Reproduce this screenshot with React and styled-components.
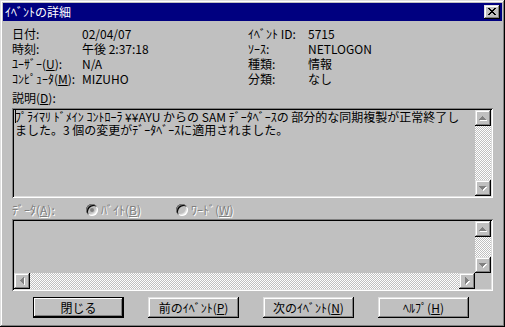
import React from 'react';
import styled, { createGlobalStyle, css } from 'styled-components';

const GlobalStyle = createGlobalStyle`
  html, body {
    margin: 0;
    padding: 0;
    background: #c0c0c0;
  }
  body {
    font-family: "Noto Sans CJK JP", "Noto Sans", sans-serif;
    font-size: 12px;
    color: #000;
  }
`;

// classic 3d edges
const raised = css`
  box-shadow: inset -1px -1px #000, inset 1px 1px #dfdfdf,
    inset -2px -2px #808080, inset 2px 2px #fff;
`;

const sunken = css`
  box-shadow: inset 1px 1px #808080, inset -1px -1px #fff,
    inset 2px 2px #000, inset -2px -2px #dfdfdf;
`;

const checker = css`
  background-color: #c0c0c0;
  background-image: conic-gradient(#fff 25%, #c0c0c0 0 50%, #fff 0 75%, #c0c0c0 0);
  background-size: 2px 2px;
`;

const Window = styled.div`
  width: 505px;
  height: 327px;
  box-sizing: border-box;
  padding: 3px;
  background: #c0c0c0;
  ${raised}
  display: flex;
  flex-direction: column;
`;

const TitleBar = styled.div`
  height: 18px;
  background: #000080;
  color: #fff;
  display: flex;
  align-items: center;
  justify-content: space-between;
  padding: 0 2px;
  line-height: 18px;
`;

const CloseButton = styled.div`
  width: 16px;
  height: 14px;
  background: #c0c0c0;
  ${raised}
  display: flex;
  align-items: center;
  justify-content: center;
  padding-bottom: 1px;
  box-sizing: border-box;
`;

const Body = styled.div`
  flex: 1;
  display: flex;
  flex-direction: column;
  padding: 5px 9px 0 9px;
`;

const InfoGrid = styled.div`
  display: grid;
  grid-template-columns: 70px 166px 60px 1fr;
  grid-auto-rows: 15px;
  line-height: 15px;
  white-space: nowrap;
`;

const Label = styled.div`
  margin-top: ${(p) => p.$mt || 0}px;
  line-height: 15px;
  white-space: nowrap;
`;

const Mn = styled.u`
  text-decoration: underline;
  text-underline-offset: 1px;
`;

const Field = styled.div`
  margin-top: ${(p) => p.$mt || 0}px;
  height: ${(p) => p.$h}px;
  box-sizing: border-box;
  padding: 2px;
  background: #c0c0c0;
  ${sunken}
`;

const DescInner = styled.div`
  height: 100%;
  display: flex;
`;

const DescText = styled.div`
  position: relative;
  flex: 1;
  padding: 0 1px;
  line-height: 13px;
  white-space: nowrap;
  overflow: hidden;
`;

const Caret = styled.span`
  position: absolute;
  left: 1px;
  top: 0;
  width: 1px;
  height: 13px;
  background: #000;
`;

const VScroll = styled.div`
  width: 16px;
  display: flex;
  flex-direction: column;
`;

const HScroll = styled.div`
  height: 16px;
  display: flex;
`;

const Track = styled.div`
  flex: 1;
  ${checker}
`;

const ArrowBox = styled.div`
  width: 16px;
  height: 16px;
  flex: none;
  box-sizing: border-box;
  background: #c0c0c0;
  ${raised}
  display: flex;
  align-items: center;
  justify-content: center;
`;

const DataGrid = styled.div`
  height: 100%;
  display: grid;
  grid-template-columns: 1fr 16px;
  grid-template-rows: 1fr 16px;
`;

const DataRow = styled.div`
  margin-top: 4px;
  height: 15px;
  line-height: 15px;
  display: flex;
  align-items: center;
  white-space: nowrap;
`;

const Disabled = styled.span`
  color: #808080;
  text-shadow: 1px 1px #fff;
  width: ${(p) => (p.$w ? `${p.$w}px` : 'auto')};
  flex: none;
`;

const RadioItem = styled.div`
  width: 90px;
  display: flex;
  align-items: center;
  gap: 3px;
  flex: none;
`;

const RadioDot = styled.span`
  position: relative;
  width: 12px;
  height: 12px;
  border-radius: 50%;
  background: #c0c0c0;
  ${sunken}
  flex: none;
  &::after {
    content: '';
    display: ${(p) => (p.$on ? 'block' : 'none')};
    position: absolute;
    left: 4px;
    top: 4px;
    width: 4px;
    height: 4px;
    border-radius: 50%;
    background: #808080;
  }
`;

const ButtonRow = styled.div`
  margin-top: 6px;
  padding-left: 21px;
  display: flex;
  gap: 24px;
`;

const Button = styled.div`
  width: 91px;
  height: 21px;
  box-sizing: border-box;
  background: #c0c0c0;
  display: flex;
  align-items: center;
  justify-content: center;
  line-height: 15px;
  white-space: nowrap;
  ${(p) =>
    p.$default
      ? css`
          box-shadow: inset 0 0 0 1px #000, inset -2px -2px #000,
            inset 2px 2px #fff, inset -3px -3px #808080;
        `
      : raised}
`;

const arrowPaths = {
  up: { d: 'M3 0h1v1H3zM2 1h3v1H2zM1 2h5v1H1zM0 3h7v1H0z', w: 7, h: 4 },
  down: { d: 'M0 0h7v1H0zM1 1h5v1H1zM2 2h3v1H2zM3 3h1v1H3z', w: 7, h: 4 },
  left: { d: 'M3 0h1v7H3zM2 1h1v5H2zM1 2h1v3H1zM0 3h1v1H0z', w: 4, h: 7 },
  right: { d: 'M0 0h1v7H0zM1 1h1v5H1zM2 2h1v3H2zM3 3h1v1H3z', w: 4, h: 7 },
};

const Arrow = ({ dir }) => {
  const { d, w, h } = arrowPaths[dir];
  return (
    <svg width={w + 1} height={h + 1} viewBox={`0 0 ${w + 1} ${h + 1}`} shapeRendering="crispEdges">
      <path d={d} fill="#fff" transform="translate(1 1)" />
      <path d={d} fill="#808080" />
    </svg>
  );
};

const CloseIcon = () => (
  <svg width="8" height="7" viewBox="0 0 8 7" shapeRendering="crispEdges">
    <path
      d="M0 0h2v1H0zM6 0h2v1H6zM1 1h2v1H1zM5 1h2v1H5zM2 2h4v1H2zM3 3h2v1H3zM2 4h4v1H2zM1 5h2v1H1zM5 5h2v1H5zM0 6h2v1H0zM6 6h2v1H6z"
      fill="#000"
    />
  </svg>
);

const info = [
  ['日付:', '02/04/07', 'ｲﾍﾞﾝﾄ ID:', '5715'],
  ['時刻:', '午後 2:37:18', 'ｿｰｽ:', 'NETLOGON'],
  [<>ﾕｰｻﾞｰ(<Mn>U</Mn>):</>, 'N/A', '種類:', '情報'],
  [<>ｺﾝﾋﾟｭｰﾀ(<Mn>M</Mn>):</>, 'MIZUHO', '分類:', 'なし'],
];

const ScrollV = () => (
  <VScroll>
    <ArrowBox>
      <Arrow dir="up" />
    </ArrowBox>
    <Track />
    <ArrowBox>
      <Arrow dir="down" />
    </ArrowBox>
  </VScroll>
);

export default function App() {
  return (
    <>
      <GlobalStyle />
      <Window>
        <TitleBar>
          <span>ｲﾍﾞﾝﾄの詳細</span>
          <CloseButton>
            <CloseIcon />
          </CloseButton>
        </TitleBar>
        <Body>
          <InfoGrid>
            {info.map((row, i) =>
              row.map((cell, j) => <div key={`${i}-${j}`}>{cell}</div>)
            )}
          </InfoGrid>

          <Label $mt={4}>
            説明(<Mn>D</Mn>):
          </Label>
          <Field $mt={3} $h={90}>
            <DescInner>
              <DescText>
                <Caret />
                ﾌﾟﾗｲﾏﾘ ﾄﾞﾒｲﾝ ｺﾝﾄﾛｰﾗ ¥¥AYU からの SAM ﾃﾞｰﾀﾍﾞｰｽの 部分的な同期複製が正常終了し
                <br />
                ました。3 個の変更がﾃﾞｰﾀﾍﾞｰｽに適用されました。
              </DescText>
              <ScrollV />
            </DescInner>
          </Field>

          <DataRow>
            <Disabled $w={74}>
              ﾃﾞｰﾀ(<Mn>A</Mn>):
            </Disabled>
            <RadioItem>
              <RadioDot $on />
              <Disabled>
                ﾊﾞｲﾄ(<Mn>B</Mn>)
              </Disabled>
            </RadioItem>
            <RadioItem>
              <RadioDot />
              <Disabled>
                ﾜｰﾄﾞ(<Mn>W</Mn>)
              </Disabled>
            </RadioItem>
          </DataRow>
          <Field $mt={2} $h={72}>
            <DataGrid>
              <div />
              <ScrollV />
              <HScroll>
                <ArrowBox>
                  <Arrow dir="left" />
                </ArrowBox>
                <Track />
                <ArrowBox>
                  <Arrow dir="right" />
                </ArrowBox>
              </HScroll>
              <div />
            </DataGrid>
          </Field>

          <ButtonRow>
            <Button $default>閉じる</Button>
            <Button>
              前のｲﾍﾞﾝﾄ(<Mn>P</Mn>)
            </Button>
            <Button>
              次のｲﾍﾞﾝﾄ(<Mn>N</Mn>)
            </Button>
            <Button>
              ﾍﾙﾌﾟ(<Mn>H</Mn>)
            </Button>
          </ButtonRow>
        </Body>
      </Window>
    </>
  );
}
